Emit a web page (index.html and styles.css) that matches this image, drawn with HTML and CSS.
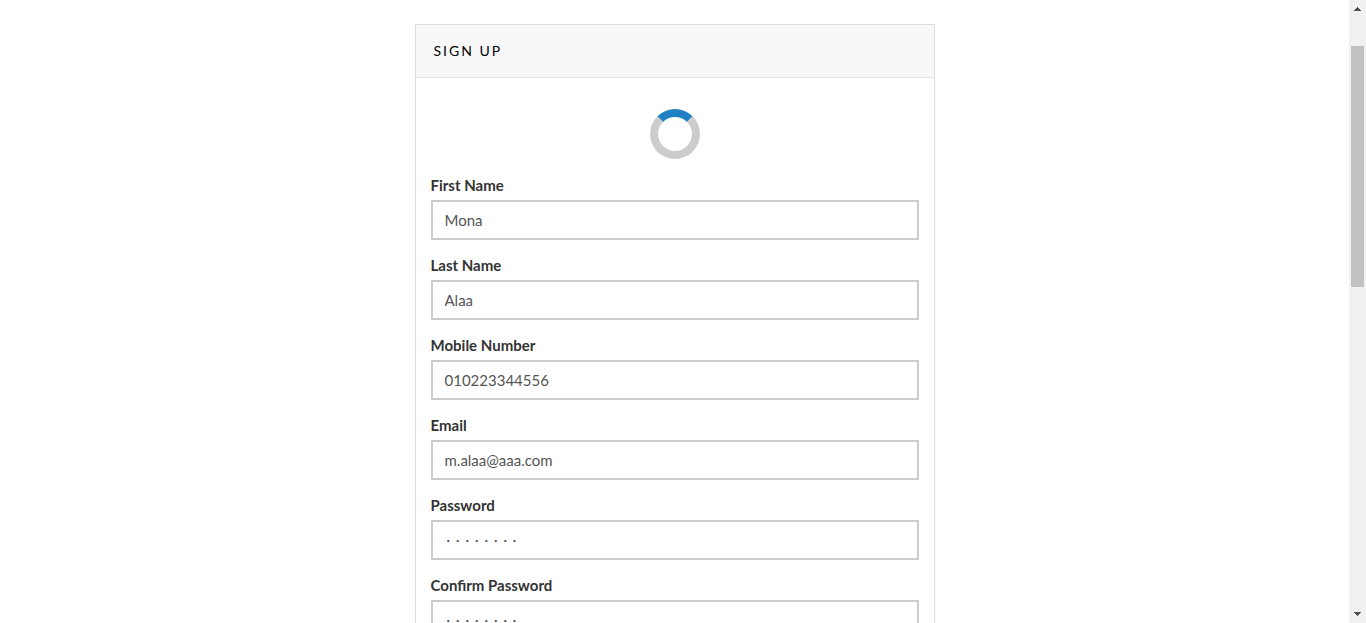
FILE: index.html
```html
<!DOCTYPE html>
<html lang="en">
<head>
<meta charset="utf-8">
<title>Sign Up</title>
<link rel="stylesheet" href="styles.css">
</head>
<body>
<main class="page">
  <section class="panel">
    <h1 class="panel-heading">SIGN UP</h1>
    <form class="panel-body">
      <div class="loader" role="status" aria-label="Loading"></div>
      <div class="field">
        <label for="first-name">First Name</label>
        <input id="first-name" type="text" value="Mona">
      </div>
      <div class="field">
        <label for="last-name">Last Name</label>
        <input id="last-name" type="text" value="Alaa">
      </div>
      <div class="field">
        <label for="mobile">Mobile Number</label>
        <input id="mobile" type="tel" value="010223344556">
      </div>
      <div class="field">
        <label for="email">Email</label>
        <input id="email" type="email" value="m.alaa@aaa.com">
      </div>
      <div class="field">
        <label for="password">Password</label>
        <input id="password" type="password" value="password">
      </div>
      <div class="field">
        <label for="confirm">Confirm Password</label>
        <input id="confirm" type="password" value="password">
      </div>
    </form>
  </section>
</main>
<div class="scrollbar" aria-hidden="true">
  <svg class="arrow" width="17" height="17" viewBox="0 0 17 17" shape-rendering="crispEdges"><path d="M8 7h1v1h1v1h1v1h1v1H5v-1h1V9h1V8h1z"/></svg>
  <div class="track"><div class="thumb"></div></div>
  <svg class="arrow" width="17" height="17" viewBox="0 0 17 17" shape-rendering="crispEdges"><path d="M5 6h7v1h-1v1h-1v1H9v1H8V9H7V8H6V7H5z"/></svg>
</div>
</body>
</html>
```
FILE: styles.css
```css
* { box-sizing: border-box; }

body {
  display: flex;
  height: 100vh;
  margin: 0;
  overflow: hidden;
  background: #fff;
  color: #333;
  font: 15px/20px Lato, "Open Sans", sans-serif;
}

.page {
  flex: 1;
  padding: 24px 15px;
  overflow: hidden;
}

.panel {
  max-width: 520px;
  margin: 0 auto;
  border: 1px solid #ddd;
}

.panel-heading {
  margin: 0;
  padding: 16px 18px;
  border-bottom: 1px solid #e5e5e5;
  background: #f8f8f8;
  color: #000;
  font-size: 14px;
  font-weight: 400;
  letter-spacing: 2px;
}

.panel-body { padding: 15px; }

.loader {
  width: 50px;
  height: 50px;
  margin: 16px auto;
  border: 8px solid #ccc;
  border-top-color: #2080c3;
  border-radius: 50%;
}

.field {
  display: flex;
  flex-direction: column;
  gap: 5px;
  margin-bottom: 15px;
}

.field label { font-weight: 700; }

.field input {
  width: 100%;
  height: 40px;
  padding: 6px 12px;
  border: 2px solid #ccc;
  border-radius: 0;
  background: #fff;
  color: #555;
  font: inherit;
}

.field input[type="password"] {
  padding-left: 14px;
  font-size: 6px;
  letter-spacing: 6px;
}

.scrollbar {
  display: flex;
  flex-direction: column;
  width: 17px;
  background: #f1f1f1;
}

.arrow { fill: #505050; }

.track {
  flex: 1;
  padding: 29px 2px 0;
}

.thumb {
  height: 43%;
  background: #c1c1c1;
}
```
